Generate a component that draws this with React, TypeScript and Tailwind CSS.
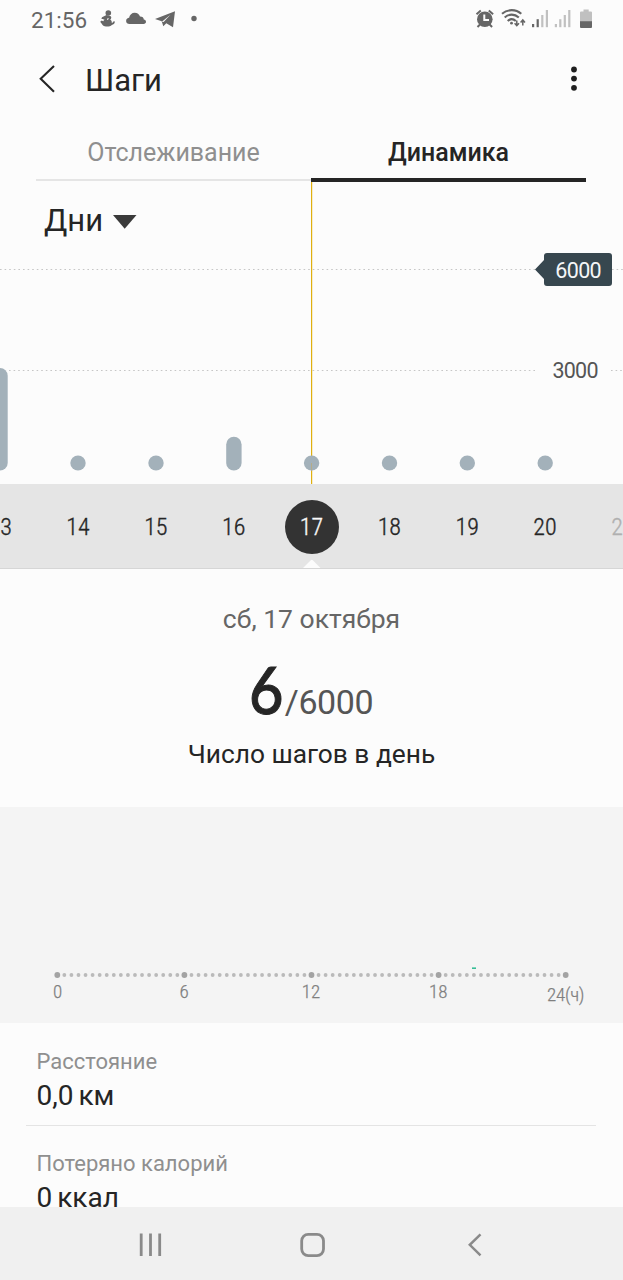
import React from "react";

const days = [
  { label: "13", x: 0, top: 368 },
  { label: "14", x: 78, top: 455.4 },
  { label: "15", x: 156, top: 455.4 },
  { label: "16", x: 233.9, top: 436.8 },
  { label: "17", x: 311.6, top: 455.4 },
  { label: "18", x: 389.5, top: 455.4 },
  { label: "19", x: 467.3, top: 455.4 },
  { label: "20", x: 545.2, top: 455.4 },
  { label: "21", x: 623, top: 0 },
];

const condensed = "font-['Roboto_Condensed','Roboto',sans-serif] [font-stretch:75%] font-light";

function StatusBar() {
  return (
    <div className="flex h-10 shrink-0 items-center justify-between pl-[31px] text-[#666666]">
      <div className="flex items-center">
        <span className="w-[68px] text-[22.5px] leading-10">21:56</span>
        <svg width="100" height="40" viewBox="99 0 100 40" fill="currentColor">
          <circle cx="108.300" cy="13" r="2.800" />
          <path d="M102 17.300l4.500-2.300 4.300 1.200c1 1.200.3 2.600-.6 3.600 1.300.7 1.800 1.800 1.500 3 .9.2 1.500-.5 1.900-1.500l1.300.3c-.2 2.200-1.500 3.200-3.100 3.400-1.700 1.900-6.900 2-8.700.4-1-.8-1.500-2-2.900-3.600l1.500-1.200c.7.3 1.200.6 1.700.6.100-.7.600-1.300 1.200-1.800-1 .1-2.500 0-3.200-.6z" />
          <path d="M107 18.700l1.700-.6-.2 1.200-1.400.8z" fill="#fcfcfc" />
          <path d="M129.500 24c-2 0-3.400-1.300-3.400-3.100 0-1.900 1.500-3 3-3.100.5-3 2.800-5 5.600-5 2.600 0 4.600 1.600 5.300 3.800 2.300-.1 3.700 1.300 3.800 2.900 1.400.3 2.200 1.200 2.200 2.300 0 1.300-1 2.200-2.400 2.200z" />
          <path d="M155 19L175 11.200 173 27.300 166.300 23.300 163.300 26.200 161.700 21.200z" />
          <path d="M161.800 21.800L170.500 14.700 163.600 22z" fill="#fcfcfc" />
          <circle cx="194" cy="18.500" r="2.700" />
        </svg>
      </div>
      <svg width="153" height="40" viewBox="470 0 153 40" fill="currentColor">
        <circle cx="484.800" cy="19.200" r="7.800" />
        <path d="M476.500 14.200l4.300-3.700M493.100 14.200l-4.300-3.700M480 24.500l-2.500 2.500M489.600 24.500l2.500 2.500" stroke="currentColor" strokeWidth="2" />
        <path d="M484.300 14.500v5.500h4.700" fill="none" stroke="#fcfcfc" strokeWidth="2" />
        <g fill="none" stroke="currentColor" strokeWidth="2.100">
          <path d="M502 13.800c5.500-4.900 13.800-4.900 19.300 0" />
          <path d="M504.700 17.500c4.100-3.800 10-3.800 14.100 0" />
          <path d="M507.700 21c2.500-2.300 5.600-2.300 8.100 0" />
        </g>
        <circle cx="511.500" cy="23.200" r="1.400" />
        <path d="M516.800 20.500v5M514.600 23.200l2.200 2.500 2.200-2.500M522.800 25.500v-5M520.600 22.500l2.200-2.500 2.200 2.500" fill="none" stroke="currentColor" strokeWidth="1.500" />
        <rect x="532" y="24" width="2.200" height="3.200" />
        <rect x="536.600" y="19.200" width="2.200" height="8" />
        <g fill="#c0c0c0">
          <rect x="541.200" y="15" width="2.200" height="12.200" />
          <rect x="545.800" y="10" width="2.200" height="17.200" />
          <rect x="554.800" y="24" width="2.200" height="3.200" />
          <rect x="559.200" y="19.200" width="2.200" height="8" />
          <rect x="563.700" y="15" width="2.200" height="12.200" />
          <rect x="568.200" y="10" width="2.200" height="17.200" />
          <path d="M580 12.500a1 1 0 0 1 1-1h2.500V9.500h5.200v2h2.300a1 1 0 0 1 1 1V22h-12z" />
        </g>
        <path d="M580 21.200h12v5.800a1 1 0 0 1-1 1h-10a1 1 0 0 1-1-1z" />
      </svg>
    </div>
  );
}

function Header() {
  return (
    <header className="flex h-20 shrink-0 items-center justify-between pr-[41px] pl-[38px]">
      <div className="flex items-center">
        <svg width="47" height="32" viewBox="0 0 47 32" fill="none" stroke="#252525" strokeWidth="2.100">
          <path d="M16 2L2.700 14.700 16 27.800" />
        </svg>
        <h1 className="pt-px text-[31px] leading-[80px] text-[#252525]">Шаги</h1>
      </div>
      <svg width="16" height="32" viewBox="0 0 16 32" fill="#1f1f1f" className="-mt-1">
        <circle cx="8" cy="7.500" r="2.900" />
        <circle cx="8" cy="16.600" r="2.900" />
        <circle cx="8" cy="25.800" r="2.900" />
      </svg>
    </header>
  );
}

function Tabs() {
  return (
    <nav className="flex h-[62px] shrink-0 pr-[37px] pl-9 text-center text-[25px] leading-[66px]">
      <div className="flex h-[62px] w-[275px] flex-col pb-px">
        <span className="h-[59px] text-[#8f8f8f]">Отслеживание</span>
        <div className="h-[2px] bg-[#e5e5e5]" />
      </div>
      <div className="flex h-[62px] w-[275px] flex-col">
        <span className="h-[58px] font-medium text-[#252525]">Динамика</span>
        <div className="h-1 bg-[#252525]" />
      </div>
    </nav>
  );
}

function StepsChart() {
  return (
    <section className="relative h-[302px] shrink-0">
      <svg width="623" height="302" viewBox="0 182 623 302" className="block">
        <line x1="0" y1="269.500" x2="536" y2="269.500" stroke="#c6c6c6" strokeDasharray="1.600 3" />
        <line x1="612" y1="269.500" x2="623" y2="269.500" stroke="#c6c6c6" strokeDasharray="1.600 3" />
        <line x1="9" y1="370.500" x2="538" y2="370.500" stroke="#c6c6c6" strokeDasharray="1.600 3" />
        <line x1="611" y1="370.500" x2="623" y2="370.500" stroke="#c6c6c6" strokeDasharray="1.600 3" />
        <rect x="311" y="182" width="1.200" height="302" fill="#e0b010" />
        {days.slice(0, 8).map((d) => (
          <rect key={d.label} x={d.x - 7.7} y={d.top} width="15.400" height={470.600 - d.top} rx="7.700" fill="#a3b1ba" />
        ))}
        <rect x="311" y="463" width="1" height="8" fill="#b5ac88" />
        <path d="M535 269.500l9-9.500v-4a3 3 0 0 1 3-3h62a3 3 0 0 1 3 3v27a3 3 0 0 1-3 3h-62a3 3 0 0 1-3-3v-4z" fill="#37474f" />
        <text x="555.200" y="277.500" fontSize="21.500" fill="#f4f6f7" textLength="46.500">6000</text>
        <text x="552.500" y="378" fontSize="21.500" fill="#555555" textLength="46">3000</text>
      </svg>
      <button className="absolute top-0 left-11 flex h-[77px] items-center gap-[9.5px] text-[31px] leading-[77px] text-[#252525]">
        Дни
        <svg width="24" height="14" viewBox="0 0 24 14" fill="#3a3a3a" className="mt-0.5">
          <path d="M0 0h23.500L11.700 13.800z" />
        </svg>
      </button>
    </section>
  );
}

function DayStrip() {
  return (
    <section className="relative flex h-[85px] shrink-0 overflow-hidden border-b border-[#d6d6d6] bg-[#e5e5e5] pt-px">
      <div className={`-ml-[38.8px] flex shrink-0 items-center text-[24px] text-[#252525] [-webkit-text-stroke:0.35px_currentColor] ${condensed}`}>
        {days.map((d) => (
          <div key={d.label} className="flex w-[77.85px] shrink-0 justify-center last:text-[#b0b0b0]">
            {d.label === "17" ? (
              <span className="flex size-[54px] shrink-0 items-center justify-center rounded-full bg-[#333333] text-[#fafafa]">17</span>
            ) : (
              d.label
            )}
          </div>
        ))}
      </div>
      <svg width="22" height="10" viewBox="0 0 22 10" className="absolute -bottom-px left-[301px]" fill="#fcfcfc">
        <path d="M1 10L9.800 1.300q1-1 2 0L20.500 10z" />
      </svg>
    </section>
  );
}

function Summary() {
  return (
    <section className="flex h-[238px] shrink-0 flex-col items-center">
      <p className="mt-[31px] text-[26.5px] leading-[38px] text-[#666666]">сб, 17 октября</p>
      <p className="mt-[6px] flex h-[78px] items-baseline leading-[90px]">
        <span className="w-[35px] text-center font-['Lato',sans-serif] text-[66px] font-medium text-[#252525] [-webkit-text-stroke:1px_#252525]">
          <span className="-ml-[3px] inline-block scale-x-90">6</span>
        </span>
        <span className="text-[34px] tracking-[-0.4px] text-[#555555]">/6000</span>
      </p>
      <p className="mt-[13px] text-[26.3px] leading-[38px] text-[#252525]">Число шагов в день</p>
    </section>
  );
}

function HourAxis() {
  return (
    <section className="h-[216px] shrink-0 bg-[#f4f4f4]">
      <svg width="623" height="216" viewBox="0 807 623 216" className={condensed} fill="#7f7f7f" fontSize="19" textAnchor="middle">
        {Array.from({ length: 73 }, (_, i) => (
          <circle key={i} cx={57.300 + i * 7.061} cy="975" r={i % 18 === 0 ? 2.900 : 1.900} fill={i % 18 === 0 ? "#a3a3a3" : "#bababa"} />
        ))}
        <rect x="472" y="967.400" width="4" height="1.600" fill="#36bd96" />
        <g stroke="#7f7f7f" strokeWidth="0.25">
          <text x="57.500" y="998">0</text>
          <text x="184" y="998">6</text>
          <text x="311" y="998">12</text>
          <text x="438.300" y="998">18</text>
          <text x="565.700" y="1000.500" textLength="37.500">24(ч)</text>
        </g>
      </svg>
    </section>
  );
}

function Metric({ label, value }: { label: string; value: string }) {
  return (
    <div className="mr-[27px] ml-[26px] h-[103px] shrink-0 border-b border-[#e4e4e4] pt-[23px] pl-[10.5px] last:pt-[22px]">
      <p className="text-[22px] leading-[31px] text-[#8f8f8f]">{label}</p>
      <p className="text-[28px] leading-[38px] [word-spacing:-2px] text-[#252525]">{value}</p>
    </div>
  );
}

function NavBar() {
  return (
    <footer className="flex h-[73px] shrink-0 items-center bg-[#f0f0f0]">
      <svg width="623" height="73" viewBox="0 1207 623 73" fill="none" stroke="#8a8a8a" strokeWidth="2.800">
        <path d="M141.200 1233.500v22.500M150.500 1233.500v22.500M159.700 1233.500v22.500" />
        <rect x="301.700" y="1234.300" width="21.800" height="21.300" rx="6.500" />
        <path d="M480.500 1234.300L469.800 1244.800 480.500 1255.300" strokeWidth="2.500" />
      </svg>
    </footer>
  );
}

export default function App() {
  return (
    <div className="flex h-[1280px] w-[623px] flex-col overflow-hidden bg-[#fcfcfc] font-['Roboto',sans-serif]">
      <StatusBar />
      <Header />
      <Tabs />
      <StepsChart />
      <DayStrip />
      <Summary />
      <HourAxis />
      <main className="flex h-[184px] shrink-0 flex-col overflow-hidden">
        <Metric label="Расстояние" value="0,0 км" />
        <Metric label="Потеряно калорий" value="0 ккал" />
      </main>
      <NavBar />
    </div>
  );
}
